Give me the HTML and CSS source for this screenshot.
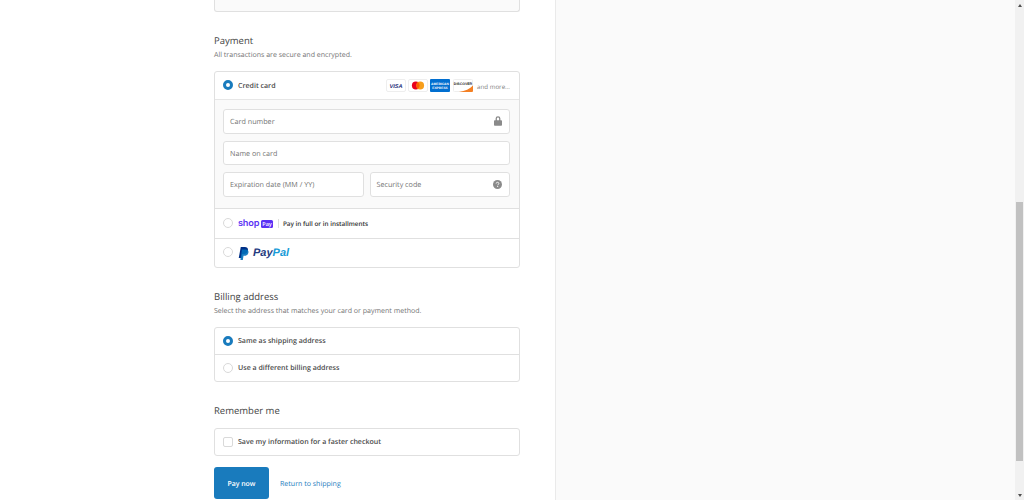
FILE: index.html
```html
<!DOCTYPE html>
<html lang="en">
<head>
<meta charset="utf-8">
<title>Payment</title>
<link rel="stylesheet" href="styles.css">
</head>
<body>
<div class="page">
  <main class="main">
    <div class="prev-card"></div>
    <section class="section payment">
      <h2>Payment</h2>
      <p class="sub">All transactions are secure and encrypted.</p>
      <div class="card">
        <div class="row row-card">
          <span class="radio on lift"></span>
          <span class="label">Credit card</span>
          <span class="brands">
            <svg class="brand" viewBox="0 0 20 13"><rect x=".5" y=".5" width="19" height="12" rx="1.5" fill="#fff" stroke="#eee"/><text x="10" y="8.700" class="t-visa">VISA</text></svg>
            <svg class="brand" viewBox="0 0 20 13"><rect x=".5" y=".5" width="19" height="12" rx="1.5" fill="#fff" stroke="#eee"/><circle cx="7.800" cy="6.500" r="3.900" fill="#e8001c"/><circle cx="12.200" cy="6.500" r="3.900" fill="#f79e1b"/><path d="M10 3.300a3.900 3.900 0 0 1 0 6.400a3.900 3.900 0 0 1 0-6.400z" fill="#ff5f00"/></svg>
            <svg class="brand" viewBox="0 0 20 13"><rect width="20" height="13" rx="1" fill="#016fd0"/><text x="10" y="6.200" class="t-amex">AMERICAN</text><text x="10" y="9.600" class="t-amex">EXPRESS</text></svg>
            <svg class="brand" viewBox="0 0 20 13"><rect x=".5" y=".5" width="19" height="12" rx="1" fill="#fff" stroke="#eee"/><path d="M20 6.500V12a1 1 0 0 1-1 1H6C12 12 17 10 20 6.500z" fill="#f48024"/><text x="10" y="5.800" class="t-disc">DISCOVER</text></svg>
          </span>
          <span class="more">and more...</span>
        </div>
        <div class="fields">
          <div class="field"><span>Card number</span>
            <svg class="field-icon" viewBox="0 0 10 12"><path d="M5 0a3 3 0 0 0-3 3v2H1a1 1 0 0 0-1 1v5a1 1 0 0 0 1 1h8a1 1 0 0 0 1-1V6a1 1 0 0 0-1-1H8V3a3 3 0 0 0-3-3zm0 1.600A1.400 1.400 0 0 1 6.400 3v2H3.600V3A1.400 1.400 0 0 1 5 1.600z" fill="#8a8a8a"/></svg>
          </div>
          <div class="field"><span>Name on card</span></div>
          <div class="field-pair">
            <div class="field"><span>Expiration date (MM / YY)</span></div>
            <div class="field"><span>Security code</span>
              <svg class="field-icon help" viewBox="0 0 12 12"><circle cx="6" cy="6" r="6" fill="#8a8a8a"/><path d="M4.200 4.700C4.200 3.700 5 3.100 6 3.100s1.800.6 1.800 1.500c0 1.300-1.500 1.300-1.500 2.500" fill="none" stroke="#fff" stroke-width="1.200"/><rect x="5.600" y="8" width="1.300" height="1.300" fill="#fff"/></svg>
            </div>
          </div>
        </div>
        <div class="row row-shop">
          <span class="radio lift"></span>
          <span class="shop-word">shop</span>
          <span class="shop-pay">Pay</span>
          <span class="shop-sep"></span>
          <span class="shop-text">Pay in full or in installments</span>
        </div>
        <div class="row row-paypal">
          <span class="radio lift"></span>
          <svg class="pp-mark" viewBox="0 0 12 14"><path d="M3 0h4.500C10 0 11.200 1.400 10.800 3.600 10.300 6.300 8.600 7.500 6.300 7.500H4.600L3.800 12H.8z" fill="#003087"/><path d="M4.300 2.600h4.400c2 .2 3 1.500 2.700 3.300-.4 2.400-2 3.600-4.200 3.600H6L5.300 14H2.600z" fill="#0070ba" opacity=".9"/></svg>
          <span class="pp-word"><b>Pay</b><i>Pal</i></span>
        </div>
      </div>
    </section>
    <section class="section billing">
      <h2>Billing address</h2>
      <p class="sub">Select the address that matches your card or payment method.</p>
      <div class="card">
        <div class="row row-bill"><span class="radio on"></span><span class="label">Same as shipping address</span></div>
        <div class="row row-bill"><span class="radio"></span><span class="label">Use a different billing address</span></div>
      </div>
    </section>
    <section class="section remember">
      <h2>Remember me</h2>
      <div class="card">
        <div class="row row-save"><span class="check"></span><span class="label">Save my information for a faster checkout</span></div>
      </div>
    </section>
    <div class="actions">
      <button class="pay" type="button">Pay now</button>
      <a class="back" href="#">Return to shipping</a>
    </div>
  </main>
  <aside class="side"></aside>
  <div class="scrollbar">
    <span class="arrow up"></span>
    <div class="track-top"></div>
    <div class="thumb"></div>
    <div class="track-bottom"></div>
    <span class="arrow down"></span>
  </div>
</div>
</body>
</html>
```
FILE: styles.css
```css
* { box-sizing: border-box; }
html, body { margin: 0; height: 100%; overflow: hidden; background: #fff; }
body { font-family: "Open Sans", "Noto Sans", sans-serif; color: #545454; font-size: 8px; text-rendering: geometricPrecision; }
.page { display: flex; height: 500px; width: 1024px; }
.main { width: 555px; padding: 0 35px 0 214px; flex: none; }
.side { flex: 1; background: #fafafa; border-left: 1px solid #eaeaea; }

.prev-card { height: 12px; background: #fafafa; border: 1px solid #e0e0e0; border-top: 0; border-radius: 0 0 3px 3px; }
.section { padding-top: 21px; }
.section h2 { margin: 0; padding-bottom: 1px; font-size: 9.500px; font-weight: 400; line-height: 15px; color: #444; }
.sub { margin: 0; font-size: 7.050px; line-height: 12px; color: #737373; }
.section .card { margin-top: 10px; }
.remember .card { margin-top: 9px; }

.card { border: 1px solid #e0e0e0; border-radius: 3px; background: #fff; overflow: hidden; }
.row { display: flex; align-items: center; padding: 0 9px 0 8px; }
.row + .row, .fields + .row { border-top: 1px solid #e0e0e0; }
.row-card { height: 27px; }
.row-shop { height: 30px; }
.row-paypal { height: 29px; }
.row-bill { height: 26px; }
.row-bill + .row-bill { height: 27px; }
.row-save { height: 25.500px; }
.label { margin-left: 5px; font-size: 7.050px; font-weight: 600; color: #4a4a4a; }

.radio { width: 10px; height: 10px; border-radius: 50%; border: 1px solid #d9d9d9; background: #fff; flex: none; }
.radio.on { border: 3.500px solid #197bbd; background: #fff; }
.radio.lift { margin-bottom: 2px; }
.check { width: 10px; height: 10px; border-radius: 2px; border: 1px solid #d9d9d9; flex: none; }

.brands { margin-left: auto; margin-bottom: 1px; display: flex; gap: 2.300px; }
.brand { width: 20px; height: 13px; display: block; }
.t-visa { font: italic 700 5.600px "Liberation Sans", sans-serif; fill: #1a2b78; text-anchor: middle; }
.t-amex { font: 700 3.300px "Liberation Sans", sans-serif; fill: #fff; text-anchor: middle; }
.t-disc { font: 700 3.500px "Liberation Sans", sans-serif; fill: #222; text-anchor: middle; }
.more { margin-left: 4.500px; font-size: 6.200px; color: #808080; padding-top: 2px; }

.fields { background: #fafafa; border-top: 1px solid #e6e6e6; padding: 9px 9px 11.500px 8px; display: flex; flex-direction: column; gap: 7px; }
.field { height: 24.500px; border: 1px solid #e0e0e0; border-radius: 3px; background: #fff; display: flex; align-items: center; padding: 0 6px; font-size: 7.200px; color: #737373; flex: none; }
.field span { padding-top: 2px; }
.field-pair { display: flex; gap: 6px; }
.field-pair .field { flex: 1; }
.field-icon { margin-left: auto; width: 8px; height: 10px; display: block; margin-right: 1px; }
.field-icon.help { width: 9px; height: 9px; }

.shop-word { margin-left: 5px; font-size: 9.200px; line-height: 1; font-weight: 600; color: #5a31f4; font-family: "Inter", sans-serif; letter-spacing: -.2px; }
.shop-pay { margin-left: 1.500px; background: #5a31f4; color: #fff; border-radius: 1.500px; font-size: 5.500px; line-height: 8px; width: 12.700px; text-align: center; font-weight: 600; }
.shop-sep { width: 1px; height: 9px; background: #ddd; margin: 0 4px 0 4.500px; }
.shop-text { font-size: 6.350px; color: #333; font-weight: 600; }

.pp-mark { width: 11px; height: 13px; margin-left: 5px; display: block; }
.pp-word { margin-left: 4px; font: italic 700 11px "Liberation Sans", sans-serif; }
.pp-word b { color: #253b80; }
.pp-word i { color: #179bd7; }

.actions { display: flex; align-items: center; margin-top: 11.500px; }
.pay { width: 55px; height: 32px; border: 0; border-radius: 3px; background: #197bbd; color: #fff; font: 600 6.900px "Open Sans", sans-serif; padding: 2px 0 0; text-rendering: geometricPrecision; }
.back { margin-left: 11px; padding-top: 2px; color: #197bbd; font-size: 7.050px; text-decoration: none; }

.scrollbar { width: 9px; background: #f1f1f1; display: flex; flex-direction: column; align-items: center; flex: none; }
.track-top { height: 195px; }
.thumb { width: 7px; height: 259px; background: #c1c1c1; }
.track-bottom { flex: 1; }
.arrow { width: 0; height: 0; border-left: 2.500px solid transparent; border-right: 2.500px solid transparent; flex: none; }
.arrow.up { margin-top: 4px; border-bottom: 3px solid #505050; }
.arrow.down { margin-bottom: 3px; border-top: 3px solid #505050; }
```
